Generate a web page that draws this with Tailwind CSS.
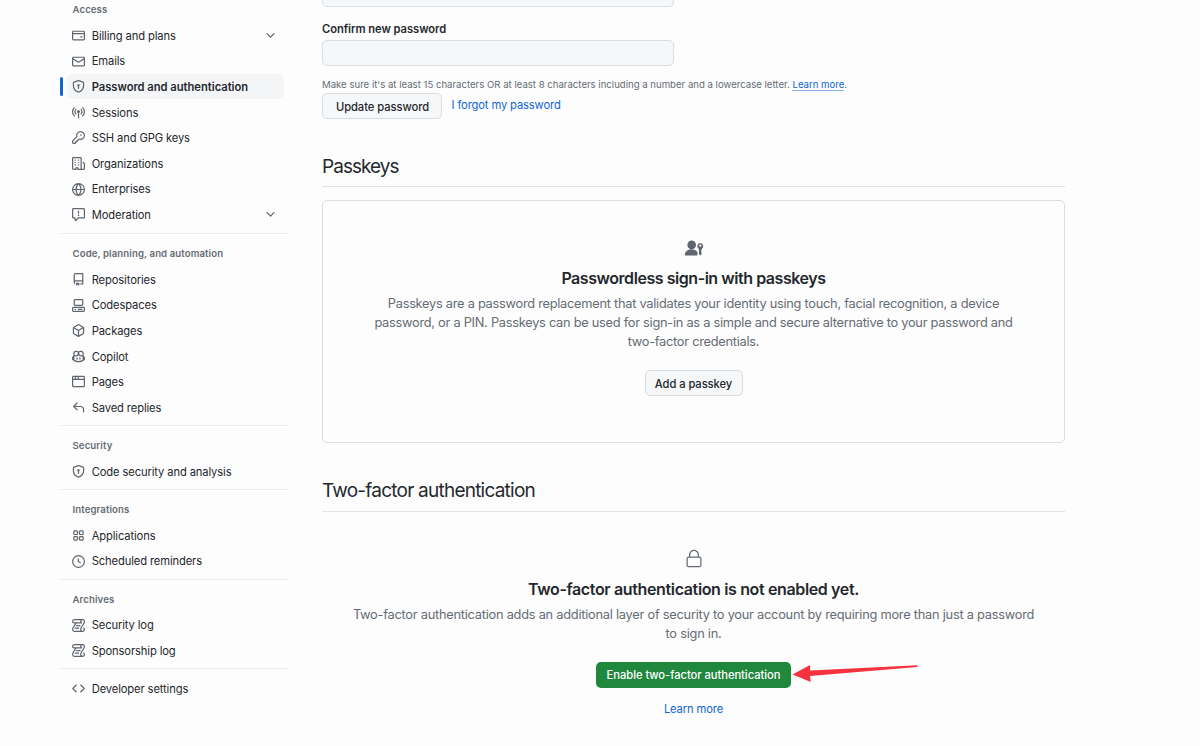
<!DOCTYPE html>
<html lang="en">
<head>
<meta charset="utf-8">
<title>Password and authentication</title>
<script src="https://cdn.jsdelivr.net/npm/@tailwindcss/browser@4"></script>
</head>
<body class="bg-[#fdfdfd] font-['Inter',sans-serif] text-[#24282d] text-[11.2px] overflow-hidden">
<svg class="hidden">
<symbol id="card" viewBox="0 0 16 16"><path d="M10.75 9a.75.75 0 0 0 0 1.5h1.5a.75.75 0 0 0 0-1.5h-1.5Z"/><path d="M0 3.75C0 2.784.784 2 1.75 2h12.5c.966 0 1.75.784 1.75 1.75v8.5A1.75 1.75 0 0 1 14.25 14H1.75A1.75 1.75 0 0 1 0 12.25ZM14.5 6.5h-13v5.75c0 .138.112.25.25.25h12.5a.25.25 0 0 0 .25-.25Zm0-2.75a.25.25 0 0 0-.25-.25H1.75a.25.25 0 0 0-.25.25V5h13Z"/></symbol>
<symbol id="mail" viewBox="0 0 16 16"><path d="M1.75 2h12.5c.966 0 1.75.784 1.75 1.75v8.5A1.75 1.75 0 0 1 14.25 14H1.75A1.75 1.75 0 0 1 0 12.25v-8.5C0 2.784.784 2 1.75 2ZM1.5 12.251c0 .138.112.25.25.25h12.5a.25.25 0 0 0 .25-.25V5.809L8.38 9.397a.75.75 0 0 1-.76 0L1.5 5.809v6.442Zm13-8.181v-.32a.25.25 0 0 0-.25-.25H1.75a.25.25 0 0 0-.25.25v.32L8 7.88Z"/></symbol>
<symbol id="shield" viewBox="0 0 16 16"><path d="m8.533.133 5.25 1.68A1.75 1.75 0 0 1 15 3.48V7c0 1.566-.32 3.182-1.303 4.682-.983 1.498-2.585 2.813-5.032 3.855a1.697 1.697 0 0 1-1.33 0c-2.447-1.042-4.049-2.357-5.032-3.855C1.32 10.182 1 8.566 1 7V3.48a1.755 1.755 0 0 1 1.217-1.667l5.25-1.68a1.748 1.748 0 0 1 1.066 0Zm-.61 1.429.001.001-5.25 1.68a.251.251 0 0 0-.174.237V7c0 1.36.275 2.666 1.057 3.859.784 1.194 2.121 2.342 4.366 3.298a.196.196 0 0 0 .154 0c2.245-.957 3.582-2.103 4.366-3.297C13.225 9.666 13.5 8.358 13.5 7V3.48a.25.25 0 0 0-.174-.238l-5.25-1.68a.25.25 0 0 0-.153 0ZM9.5 6.5c0 .536-.286 1.032-.75 1.3v2.45a.75.75 0 0 1-1.5 0V7.8A1.5 1.5 0 1 1 9.5 6.5Z"/></symbol>
<symbol id="broadcast" viewBox="0 0 16 16"><path d="M8.75 8.582v5.668a.75.75 0 0 1-1.5 0V8.582a1.75 1.75 0 1 1 1.5 0Zm3.983-7.125a.75.75 0 0 1 1.06.026A7.976 7.976 0 0 1 16 7c0 2.139-.84 4.083-2.207 5.517a.75.75 0 1 1-1.086-1.034A6.474 6.474 0 0 0 14.5 7a6.474 6.474 0 0 0-1.793-4.483.75.75 0 0 1 .026-1.06Zm-9.466 0c.3.286.312.76.026 1.06A6.474 6.474 0 0 0 1.5 7a6.47 6.47 0 0 0 1.793 4.483.75.75 0 0 1-1.086 1.034A7.973 7.973 0 0 1 0 7c0-2.139.84-4.083 2.207-5.517a.75.75 0 0 1 1.06-.026Zm8.556 2.321A4.988 4.988 0 0 1 13 7a4.988 4.988 0 0 1-1.177 3.222.75.75 0 1 1-1.146-.967A3.487 3.487 0 0 0 11.5 7c0-.86-.309-1.645-.823-2.255a.75.75 0 0 1 1.146-.967Zm-6.492.958A3.48 3.48 0 0 0 4.5 7a3.48 3.48 0 0 0 .823 2.255.75.75 0 0 1-1.146.967A4.981 4.981 0 0 1 3 7a4.982 4.982 0 0 1 1.188-3.236.75.75 0 1 1 1.143.972Z"/></symbol>
<symbol id="key" viewBox="0 0 16 16"><path d="M10.5 0a5.499 5.499 0 1 1-1.288 10.848l-.932.932a.749.749 0 0 1-.53.22H7v.75a.749.749 0 0 1-.22.53l-.5.5a.749.749 0 0 1-.53.22H5v.75a.749.749 0 0 1-.22.53l-.5.5a.749.749 0 0 1-.53.22h-2A1.75 1.75 0 0 1 0 14.25v-2c0-.199.079-.389.22-.53l4.932-4.932A5.5 5.5 0 0 1 10.5 0Zm-4 5.5c-.001.431.069.86.205 1.269a.75.75 0 0 1-.181.768L1.5 12.56v1.69c0 .138.112.25.25.25h1.69l.06-.06v-1.19a.75.75 0 0 1 .75-.75h1.19l.06-.06v-1.19a.75.75 0 0 1 .75-.75h1.19l1.023-1.025a.75.75 0 0 1 .768-.18A4 4 0 1 0 6.5 5.5ZM11 6a1 1 0 1 1 0-2 1 1 0 0 1 0 2Z"/></symbol>
<symbol id="org" viewBox="0 0 16 16"><path d="M1.75 16A1.75 1.75 0 0 1 0 14.25V1.75C0 .784.784 0 1.75 0h8.5C11.216 0 12 .784 12 1.75v12.5c0 .085-.006.168-.018.25h2.268a.25.25 0 0 0 .25-.25V8.285a.25.25 0 0 0-.111-.208l-1.055-.703a.749.749 0 1 1 .832-1.248l1.055.703c.487.325.779.871.779 1.456v5.965A1.75 1.75 0 0 1 14.25 16h-3.5a.766.766 0 0 1-.197-.026c-.099.017-.2.026-.303.026h-3a.75.75 0 0 1-.75-.75V14h-1v1.25a.75.75 0 0 1-.75.75Zm-.25-1.75c0 .138.112.25.25.25H4v-1.25a.75.75 0 0 1 .75-.75h2.5a.75.75 0 0 1 .75.75v1.25h2.25a.25.25 0 0 0 .25-.25V1.75a.25.25 0 0 0-.25-.25h-8.5a.25.25 0 0 0-.25.25ZM3.75 6h.5a.75.75 0 0 1 0 1.5h-.5a.75.75 0 0 1 0-1.5ZM3 3.75A.75.75 0 0 1 3.75 3h.5a.75.75 0 0 1 0 1.5h-.5A.75.75 0 0 1 3 3.75Zm4 3A.75.75 0 0 1 7.75 6h.5a.75.75 0 0 1 0 1.5h-.5A.75.75 0 0 1 7 6.75ZM7.75 3h.5a.75.75 0 0 1 0 1.5h-.5a.75.75 0 0 1 0-1.5ZM3 9.75A.75.75 0 0 1 3.75 9h.5a.75.75 0 0 1 0 1.5h-.5A.75.75 0 0 1 3 9.75ZM7.75 9h.5a.75.75 0 0 1 0 1.5h-.5a.75.75 0 0 1 0-1.5Z"/></symbol>
<symbol id="globe" viewBox="0 0 16 16"><path d="M8 0a8 8 0 1 1 0 16A8 8 0 0 1 8 0ZM5.78 8.75a9.64 9.64 0 0 0 1.363 4.177c.255.426.542.832.857 1.215.245-.296.551-.705.857-1.215A9.64 9.64 0 0 0 10.22 8.75Zm4.44-1.5a9.64 9.64 0 0 0-1.363-4.177c-.307-.51-.612-.919-.857-1.215a9.927 9.927 0 0 0-.857 1.215A9.64 9.64 0 0 0 5.78 7.25Zm-5.944 1.5H1.543a6.507 6.507 0 0 0 4.666 5.5c-.123-.181-.24-.365-.352-.552-.715-1.192-1.437-2.874-1.581-4.948Zm-2.733-1.5h2.733c.144-2.074.866-3.756 1.58-4.948.12-.197.237-.381.353-.552a6.507 6.507 0 0 0-4.666 5.5Zm10.181 1.5c-.144 2.074-.866 3.756-1.58 4.948-.12.197-.237.381-.353.552a6.507 6.507 0 0 0 4.666-5.5Zm2.733-1.5a6.507 6.507 0 0 0-4.666-5.5c.123.181.24.365.353.552.714 1.192 1.436 2.874 1.58 4.948Z"/></symbol>
<symbol id="report" viewBox="0 0 16 16"><path d="M0 1.75C0 .784.784 0 1.75 0h12.5C15.216 0 16 .784 16 1.75v9.5A1.75 1.75 0 0 1 14.25 13H8.06l-2.573 2.573A1.458 1.458 0 0 1 3 14.543V13H1.75A1.75 1.75 0 0 1 0 11.25Zm1.75-.25a.25.25 0 0 0-.25.25v9.5c0 .138.112.25.25.25h2a.75.75 0 0 1 .75.75v2.19l2.72-2.72a.749.749 0 0 1 .53-.22h6.5a.25.25 0 0 0 .25-.25v-9.5a.25.25 0 0 0-.25-.25Zm7 2.25v2.5a.75.75 0 0 1-1.5 0v-2.5a.75.75 0 0 1 1.5 0ZM9 9a1 1 0 1 1-2 0 1 1 0 0 1 2 0Z"/></symbol>
<symbol id="repo" viewBox="0 0 16 16"><path d="M2 2.5A2.5 2.5 0 0 1 4.5 0h8.75a.75.75 0 0 1 .75.75v12.5a.75.75 0 0 1-.75.75h-2.5a.75.75 0 0 1 0-1.5h1.75v-2h-8a1 1 0 0 0-.714 1.7.75.75 0 1 1-1.072 1.05A2.495 2.495 0 0 1 2 11.5Zm10.5-1h-8a1 1 0 0 0-1 1v6.708A2.486 2.486 0 0 1 4.5 9h8ZM5 12.25a.25.25 0 0 1 .25-.25h3.5a.25.25 0 0 1 .25.25v3.25a.25.25 0 0 1-.4.2l-1.45-1.087a.249.249 0 0 0-.3 0L5.4 15.7a.25.25 0 0 1-.4-.2Z"/></symbol>
<symbol id="codespaces" viewBox="0 0 16 16"><path d="M0 11.25c0-.966.784-1.75 1.75-1.75h12.5c.966 0 1.75.784 1.75 1.75v3A1.75 1.75 0 0 1 14.25 16H1.75A1.75 1.75 0 0 1 0 14.25Zm2-9.5C2 .784 2.784 0 3.75 0h8.5C13.216 0 14 .784 14 1.75v5a1.75 1.75 0 0 1-1.75 1.75h-8.5A1.75 1.75 0 0 1 2 6.75Zm1.75-.25a.25.25 0 0 0-.25.25v5c0 .138.112.25.25.25h8.5a.25.25 0 0 0 .25-.25v-5a.25.25 0 0 0-.25-.25Zm-2 9.5a.25.25 0 0 0-.25.25v3c0 .138.112.25.25.25h12.5a.25.25 0 0 0 .25-.25v-3a.25.25 0 0 0-.25-.25Z"/><path d="M7 12.75a.75.75 0 0 1 .75-.75h4.5a.75.75 0 0 1 0 1.5h-4.5a.75.75 0 0 1-.75-.75Zm-4 0a.75.75 0 0 1 .75-.75h.5a.75.75 0 0 1 0 1.5h-.5a.75.75 0 0 1-.75-.75Z"/></symbol>
<symbol id="package" viewBox="0 0 16 16"><path d="m8.878.392 5.25 3.045c.54.314.872.89.872 1.514v6.098a1.75 1.75 0 0 1-.872 1.514l-5.25 3.045a1.75 1.75 0 0 1-1.756 0l-5.25-3.045A1.75 1.75 0 0 1 1 11.049V4.951c0-.624.332-1.201.872-1.514L7.122.392a1.75 1.75 0 0 1 1.756 0ZM7.875 1.69l-4.63 2.685L8 7.133l4.755-2.758-4.63-2.685a.248.248 0 0 0-.25 0ZM2.5 5.677v5.372c0 .09.047.171.125.216l4.625 2.683V8.432Zm6.25 8.271 4.625-2.683a.25.25 0 0 0 .125-.216V5.677L8.75 8.432Z"/></symbol>
<symbol id="copilot" viewBox="0 0 16 16"><path d="M7.998 15.035c-4.562 0-7.873-2.914-7.998-3.749V9.338c.085-.628.677-1.686 1.588-2.065.013-.07.024-.143.036-.218.029-.183.06-.384.126-.612-.201-.508-.254-1.084-.254-1.656 0-.87.128-1.769.693-2.484.579-.733 1.494-1.124 2.724-1.261 1.206-.134 2.262.034 2.944.765.05.053.096.108.139.165.044-.057.094-.112.143-.165.682-.731 1.738-.899 2.944-.765 1.23.137 2.145.528 2.724 1.261.566.715.693 1.614.693 2.484 0 .572-.053 1.148-.254 1.656.066.228.098.429.126.612.012.076.024.148.037.218.924.385 1.522 1.471 1.591 2.095v1.872c0 .766-3.351 3.795-8.002 3.795Zm0-1.485c2.28 0 4.584-1.11 5.002-1.433V7.862l-.023-.116c-.49.21-1.075.291-1.727.291-1.146 0-2.059-.327-2.71-.991A3.222 3.222 0 0 1 8 6.303a3.24 3.24 0 0 1-.544.743c-.65.664-1.563.991-2.71.991-.652 0-1.236-.081-1.727-.291l-.023.116v4.255c.419.323 2.722 1.433 5.002 1.433ZM6.762 2.83c-.193-.206-.637-.413-1.682-.297-1.019.113-1.479.404-1.713.7-.247.312-.369.789-.369 1.554 0 .793.129 1.171.308 1.371.162.181.519.379 1.442.379.853 0 1.339-.235 1.638-.54.315-.322.527-.827.617-1.553.117-.935-.037-1.395-.241-1.614Zm4.155-.297c-1.044-.116-1.488.091-1.681.297-.204.219-.359.679-.242 1.614.091.726.303 1.231.618 1.553.299.305.784.54 1.638.54.922 0 1.28-.198 1.442-.379.179-.2.308-.578.308-1.371 0-.765-.123-1.242-.37-1.554-.233-.296-.693-.587-1.713-.7Z"/><path d="M6.25 9.037a.75.75 0 0 1 .75.75v1.501a.75.75 0 0 1-1.5 0V9.787a.75.75 0 0 1 .75-.75Zm4.25.75v1.501a.75.75 0 0 1-1.5 0V9.787a.75.75 0 0 1 1.5 0Z"/></symbol>
<symbol id="browser" viewBox="0 0 16 16"><path d="M0 2.75C0 1.784.784 1 1.75 1h12.5c.966 0 1.75.784 1.75 1.75v10.5A1.75 1.75 0 0 1 14.25 15H1.75A1.75 1.75 0 0 1 0 13.25ZM14.5 6h-13v7.25c0 .138.112.25.25.25h12.5a.25.25 0 0 0 .25-.25Zm-6-3.5v2h6V2.75a.25.25 0 0 0-.25-.25ZM5 2.5v2h2v-2Zm-3.25 0a.25.25 0 0 0-.25.25V4.5h2v-2Z"/></symbol>
<symbol id="reply" viewBox="0 0 16 16"><path d="M6.78 1.97a.75.75 0 0 1 0 1.06L3.81 6h6.44A4.75 4.75 0 0 1 15 10.75v2.5a.75.75 0 0 1-1.5 0v-2.5a3.25 3.25 0 0 0-3.25-3.25H3.81l2.97 2.97a.749.749 0 0 1-.326 1.275.749.749 0 0 1-.734-.215L1.47 7.28a.75.75 0 0 1 0-1.06l4.25-4.25a.75.75 0 0 1 1.06 0Z"/></symbol>
<symbol id="apps" viewBox="0 0 16 16"><g fill="none" stroke="currentColor" stroke-width="1.5"><rect x="2.25" y="2.25" width="4.5" height="4.5" rx="1"/><rect x="9.25" y="2.25" width="4.5" height="4.5" rx="1"/><rect x="2.25" y="9.25" width="4.5" height="4.5" rx="1"/><rect x="9.25" y="9.25" width="4.5" height="4.5" rx="1"/></g></symbol>
<symbol id="clock" viewBox="0 0 16 16"><path d="M8 0a8 8 0 1 1 0 16A8 8 0 0 1 8 0ZM1.5 8a6.5 6.5 0 1 0 13 0 6.5 6.5 0 0 0-13 0Zm7-3.25v2.992l2.028.812a.75.75 0 0 1-.557 1.392l-2.5-1A.751.751 0 0 1 7 8.25v-3.5a.75.75 0 0 1 1.5 0Z"/></symbol>
<symbol id="log" viewBox="0 0 16 16"><path d="M5 8.25a.75.75 0 0 1 .75-.75h4a.75.75 0 0 1 0 1.5h-4A.75.75 0 0 1 5 8.25ZM4 10.5A.75.75 0 0 0 4 12h4a.75.75 0 0 0 0-1.5H4Z"/><path d="M13-.005c1.654 0 3 1.328 3 3 0 .982-.338 1.933-.783 2.818-.443.879-1.028 1.758-1.582 2.588l-.011.017c-.568.853-1.104 1.659-1.501 2.446-.398.789-.623 1.494-.623 2.136a1.5 1.5 0 1 0 2.333-1.248.75.75 0 0 1 .834-1.246A3 3 0 0 1 13 16H3a3 3 0 0 1-3-3c0-1.582.891-3.135 1.777-4.506.209-.322.418-.637.623-.946.473-.709.923-1.386 1.287-2.048H2.51c-.576 0-1.381-.133-1.907-.783A2.68 2.68 0 0 1 0 2.995a3 3 0 0 1 3-3Zm0 1.5a1.5 1.5 0 0 0-1.5 1.5c0 .476.223.834.667 1.132A.75.75 0 0 1 11.75 5.5H5.368c-.467 1.003-1.141 2.015-1.773 2.963-.192.289-.381.571-.558.845C2.13 10.711 1.5 11.916 1.5 13A1.5 1.5 0 0 0 3 14.5h7.401A2.989 2.989 0 0 1 10 13c0-.979.338-1.928.784-2.812.441-.874 1.023-1.748 1.575-2.576l.017-.026c.568-.853 1.103-1.658 1.501-2.448.398-.79.623-1.497.623-2.143 0-.838-.669-1.5-1.5-1.5Zm-10 0a1.5 1.5 0 0 0-1.5 1.5c0 .321.1.569.27.778.097.12.325.227.74.227h7.674A2.737 2.737 0 0 1 10 2.995c0-.546.146-1.059.401-1.5Z"/></symbol>
<symbol id="code" viewBox="0 0 16 16"><path d="m11.28 3.22 4.25 4.25a.75.75 0 0 1 0 1.06l-4.25 4.25a.749.749 0 0 1-1.275-.326.749.749 0 0 1 .215-.734L13.94 8l-3.72-3.72a.749.749 0 0 1 .326-1.275.749.749 0 0 1 .734.215Zm-6.56 0a.751.751 0 0 1 1.042.018.751.751 0 0 1 .018 1.042L2.06 8l3.72 3.72a.749.749 0 0 1-.326 1.275.749.749 0 0 1-.734-.215L.47 8.53a.75.75 0 0 1 0-1.06Z"/></symbol>
<symbol id="chevron" viewBox="0 0 16 16"><path d="M12.78 5.22a.749.749 0 0 1 0 1.06l-4.25 4.25a.749.749 0 0 1-1.06 0L3.22 6.28a.749.749 0 1 1 1.06-1.06L8 8.939l3.72-3.719a.749.749 0 0 1 1.06 0Z"/></symbol>
</svg>
<div class="flex h-[746px]">
<nav class="w-[322px] shrink-0 pl-[59.5px] [&_a]:flex [&_a]:h-[25.6px] [&_a]:items-center [&_a]:gap-[6.6px] [&_a]:pl-[12.6px] [&_a]:w-[224.5px] [&_span]:pt-[1.4px] [&_span]:tracking-[-0.12px] [&_svg]:size-[13px] [&_svg]:fill-[#5f666e] [&_svg]:text-[#5f666e] [&_svg]:shrink-0 [&_h3]:text-[9.6px] [&_h3]:font-semibold [&_h3]:tracking-[0.11px] [&_h3]:text-[#656c74] [&_h3]:pl-[13px] [&_h3]:leading-[12px] [&_section]:w-[229px] [&_section]:mb-[4.9px] [&_section]:border-[#e9ebed]">
<section>
<h3 class="pt-[3.6px] pb-[7.1px]">Access</h3>
<a><svg><use href="#card"/></svg><span>Billing and plans</span><svg class="ml-auto mr-[7px]"><use href="#chevron"/></svg></a>
<a><svg><use href="#mail"/></svg><span>Emails</span></a>
<a class="relative font-semibold before:absolute before:left-0 before:top-[3px] before:h-[19px] before:w-[3px] before:rounded-full before:bg-[#1464d2] after:absolute after:-z-10 after:left-[7px] after:right-0 after:inset-y-0 after:rounded-[5px] after:bg-[#f4f5f7]"><svg><use href="#shield"/></svg><span class="tracking-[-0.02px]!">Password and authentication</span></a>
<a><svg><use href="#broadcast"/></svg><span>Sessions</span></a>
<a><svg><use href="#key"/></svg><span>SSH and GPG keys</span></a>
<a><svg><use href="#org"/></svg><span>Organizations</span></a>
<a><svg><use href="#globe"/></svg><span>Enterprises</span></a>
<a><svg><use href="#report"/></svg><span>Moderation</span><svg class="ml-auto mr-[7px]"><use href="#chevron"/></svg></a>
</section>
<section class="border-t mt-[5.8px]">
<h3 class="pt-[14px] pb-[6.5px]">Code, planning, and automation</h3>
<a><svg><use href="#repo"/></svg><span>Repositories</span></a>
<a><svg><use href="#codespaces"/></svg><span>Codespaces</span></a>
<a><svg><use href="#package"/></svg><span>Packages</span></a>
<a><svg><use href="#copilot"/></svg><span>Copilot</span></a>
<a><svg><use href="#browser"/></svg><span>Pages</span></a>
<a><svg><use href="#reply"/></svg><span>Saved replies</span></a>
</section>
<section class="border-t">
<h3 class="pt-[14px] pb-[6.5px]">Security</h3>
<a><svg><use href="#shield"/></svg><span>Code security and analysis</span></a>
</section>
<section class="border-t">
<h3 class="pt-[14px] pb-[6.5px]">Integrations</h3>
<a><svg><use href="#apps"/></svg><span>Applications</span></a>
<a><svg><use href="#clock"/></svg><span>Scheduled reminders</span></a>
</section>
<section class="border-t">
<h3 class="pt-[14px] pb-[6.5px]">Archives</h3>
<a><svg><use href="#log"/></svg><span>Security log</span></a>
<a><svg><use href="#log"/></svg><span>Sponsorship log</span></a>
</section>
<section class="border-t pt-[6.8px]">
<a><svg><use href="#code"/></svg><span>Developer settings</span></a>
</section>
</nav>
<main class="w-[743px] flex flex-col">
<div class="h-[7px] w-[352px] shrink-0 rounded-b-[5px] border border-t-0 border-[#dadde1] bg-[#f5f7f9]"></div>
<label class="mt-[13.6px] h-[15.4px] leading-[16px] font-semibold text-[11.2px] tracking-[-0.05px]">Confirm new password</label>
<div class="mt-[4px] h-[26px] w-[352px] shrink-0 rounded-[5px] border border-[#dadde1] bg-[#f5f7f9]"></div>
<p class="mt-[12px] h-[15px] leading-[14px] text-[9.6px] text-[#656c74] whitespace-nowrap">Make sure it's at least 15 characters OR at least 8 characters including a number and a lowercase letter. <a class="text-[#0f65d6] border-b border-[#0f65d6]/50">Learn more</a>.</p>
<div class="flex h-[26px] gap-[9.5px]">
<button class="w-[120px] rounded-[5px] border border-[#d9dce0] bg-[#f5f7f9] font-medium tracking-[-0.06px] pl-[1px] pt-[2px]">Update password</button>
<a class="leading-[25px] tracking-[-0.13px] text-[#0f65d6]">I forgot my password</a>
</div>
<h2 class="mt-[32px] h-[36px] border-b border-[#e0e3e6] text-[19px] tracking-[-0.95px] leading-[32px]">Passkeys</h2>
<div class="mt-[13px] h-[243.5px] rounded-[5px] border border-[#dadde1] flex flex-col items-center text-center">
<svg class="mt-[38px] h-[20px] w-[20px] shrink-0 fill-[#5f666e]" viewBox="0 0 20 20"><circle cx="7.7" cy="5.9" r="4.3"/><path d="M.8 16.1c0-3.4 2.8-5.8 6.7-5.8 2.1 0 3.8.7 5 1.8l1 1.2v2.8q0 .4-.4.4H1.2q-.4 0-.4-.4Z"/><path fill-rule="evenodd" d="M16.3 4.1a3.1 3.1 0 0 1 1.4 5.8v1l-.7.9.7.9-.7.8.7.8v.8l-1.4 1.5-1.4-1.5V9.9a3.1 3.1 0 0 1 1.4-5.8Zm0 1.5a1.1 1.1 0 1 0 0 2.2 1.1 1.1 0 0 0 0-2.2Z"/></svg>
<h3 class="mt-[8px] h-[24px] text-[16px] leading-[23px] tracking-[-0.45px] font-semibold">Passwordless sign-in with passkeys</h3>
<p class="mt-[3px] text-[12.8px] leading-[19.2px] tracking-[-0.26px] text-[#656c74] whitespace-nowrap">Passkeys are a password replacement that validates your identity using touch, facial recognition, a device<br>password, or a PIN. Passkeys can be used for sign-in as a simple and secure alternative to your password and<br>two-factor credentials.</p>
<button class="mt-[18.5px] h-[26px] w-[98px] shrink-0 rounded-[5px] border border-[#d9dce0] bg-[#f5f7f9] font-medium tracking-[-0.06px] pt-[2px]">Add a passkey</button>
</div>
<h2 class="mt-[31.5px] h-[37px] border-b border-[#e0e3e6] text-[19px] tracking-[-0.77px] leading-[31px]">Two-factor authentication</h2>
<div class="flex flex-col items-center text-center">
<svg class="mt-[37px] size-[20px] fill-[#656c74]" viewBox="0 0 24 24"><path d="M6 9V7.25C6 3.845 8.503 1 12 1s6 2.845 6 6.25V9h.5a2.5 2.5 0 0 1 2.5 2.5v8a2.5 2.5 0 0 1-2.5 2.5h-13A2.5 2.5 0 0 1 3 19.5v-8A2.5 2.5 0 0 1 5.5 9Zm-1.5 2.5v8a1 1 0 0 0 1 1h13a1 1 0 0 0 1-1v-8a1 1 0 0 0-1-1h-13a1 1 0 0 0-1 1Zm3-4.25V9h9V7.25c0-2.67-1.922-4.75-4.5-4.75-2.58 0-4.5 2.08-4.5 4.75Z"/></svg>
<h3 class="mt-[9px] h-[24px] text-[16px] leading-[23px] tracking-[-0.36px] font-semibold">Two-factor authentication is not enabled yet.</h3>
<p class="mt-[3px] text-[12.8px] leading-[19.2px] tracking-[-0.24px] text-[#656c74] whitespace-nowrap">Two-factor authentication adds an additional layer of security to your account by requiring more than just a password<br>to sign in.</p>
<div class="relative mt-[19px]">
<button class="block h-[26px] w-[195px] rounded-[5px] bg-[#1f883d] font-medium tracking-[-0.05px] text-white whitespace-nowrap">Enable two-factor authentication</button>
<svg class="absolute left-[196px] top-[-1px] h-[24px] w-[128px] fill-[#f5333f]" viewBox="0 0 128 24"><path d="M.5 13.500 18 4l.2 5.500L125.500 4.200v1.800L18 15l.8 6Z"/></svg>
</div>
<a class="mt-[11.5px] leading-[18px] tracking-[-0.13px] text-[#0f65d6]">Learn more</a>
</div>
</main>
</div>
</body>
</html>
